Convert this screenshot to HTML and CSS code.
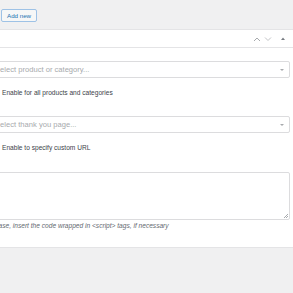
FILE: index.html
```html
<!DOCTYPE html>
<html>
<head>
<meta charset="utf-8">
<link rel="stylesheet" href="styles.css">
</head>
<body>
<div class="top">
  <button class="btn">Add new</button>
</div>
<div class="postbox">
  <div class="hdr">
    <svg class="ico" width="8" height="6" viewBox="0 0 8 6"><path d="M1 5 L4 2 L7 5" fill="none" stroke="#a7aaad" stroke-width="1"/></svg>
    <svg class="ico" width="8" height="6" viewBox="0 0 8 6"><path d="M1 1.5 L4 4.5 L7 1.5" fill="none" stroke="#c3c4c7" stroke-width="1"/></svg>
    <svg class="ico tog" width="6" height="6" viewBox="0 0 6 6"><path d="M1 4 L3 1.5 L5 4 Z" fill="#787c82"/></svg>
  </div>
  <div class="inside">
    <div class="select"><span>Select product or category...</span><i class="caret"></i></div>
    <label class="check"><span class="box"></span>Enable for all products and categories</label>
    <div class="select s2"><span>Select thank you page...</span><i class="caret"></i></div>
    <label class="check"><span class="box"></span>Enable to specify custom URL</label>
    <div class="textarea"><i class="grip"></i></div>
    <p class="desc">Please, insert the code wrapped in &lt;script&gt; tags, if necessary</p>
  </div>
</div>
</body>
</html>
```
FILE: styles.css
```css
html, body {
  margin: 0;
  padding: 0;
  background: #f0f0f1;
  font-family: "Liberation Sans", Arial, sans-serif;
  color: #3c434a;
}
.top {
  padding: 9px 0 0 1px;
  height: 20px;
}
.btn {
  display: block;
  height: 13px;
  padding: 0 5px;
  font-family: "Liberation Sans", Arial, sans-serif;
  font-size: 6.2px;
  line-height: 11px;
  color: #2271b1;
  background: #f6f7f7;
  border: 1px solid #9ec2e6;
  border-radius: 2px;
}
.postbox {
  margin-left: -40px;
  background: #fff;
  border-top: 1px solid #e4e4e6;
  border-bottom: 1px solid #e4e4e6;
}
.hdr {
  height: 17px;
  border-bottom: 1px solid #e4e4e6;
  display: flex;
  align-items: center;
  justify-content: flex-end;
  padding-right: 7px;
  gap: 3px;
}
.ico { display: block; }
.tog { margin-left: 5px; }
.inside {
  padding: 13px 3px 18px 32px;
}
.select {
  height: 17px;
  box-sizing: border-box;
  border: 1px solid #dcdcde;
  border-radius: 2px;
  display: flex;
  align-items: center;
  justify-content: space-between;
  padding: 0 5px 0 2px;
  font-size: 7.6px;
  color: #a7aaad;
}
.caret {
  width: 0;
  height: 0;
  border-left: 2px solid transparent;
  border-right: 2px solid transparent;
  border-top: 2px solid #a7aaad;
}
.check {
  display: flex;
  align-items: center;
  gap: 4px;
  font-size: 6.6px;
  color: #3c434a;
  margin: 10px 0 0 0;
  height: 8px;
}
.box {
  width: 8px;
  height: 8px;
  border: 1px solid #8c8f94;
  margin-left: -2px;
  box-sizing: border-box;
}
.s2 { margin-top: 20px; }
.check + .textarea { margin-top: 21px; }
.textarea {
  height: 46px;
  border: 1px solid #dcdcde;
  border-radius: 2px;
  position: relative;
}
.grip {
  position: absolute;
  right: 1px;
  bottom: 1px;
  width: 4px;
  height: 4px;
  background: linear-gradient(135deg, transparent 45%, #a7aaad 45%, #a7aaad 55%, transparent 55%, transparent 75%, #a7aaad 75%, #a7aaad 85%, transparent 85%);
}
.desc {
  margin: 2px 0 0 -3px;
  font-size: 6.6px;
  font-style: italic;
  color: #646970;
  line-height: 7px;
}
```
